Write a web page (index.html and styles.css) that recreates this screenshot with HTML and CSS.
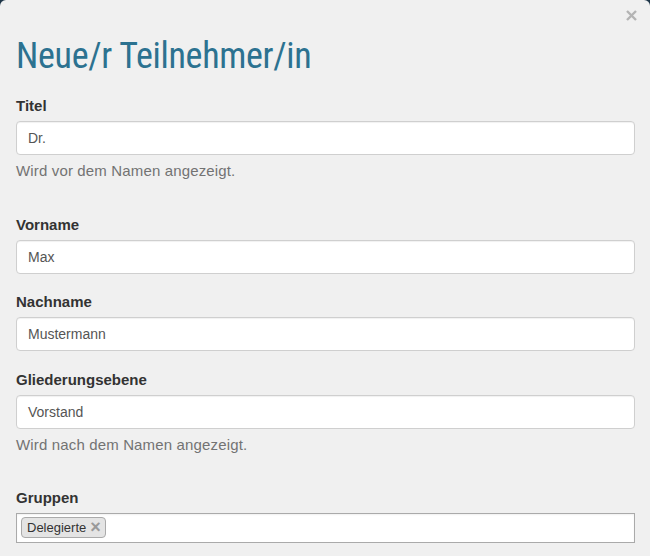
FILE: index.html
```html
<!DOCTYPE html>
<html lang="de">
<head>
<meta charset="utf-8">
<title>Neue/r Teilnehmer/in</title>
<link rel="stylesheet" href="styles.css">
</head>
<body>
<div class="modal">
  <div class="topbar">
    <button class="close" type="button" aria-label="Schließen">
      <svg width="11" height="11" viewBox="0 0 11 11"><path d="M1 1 L10 10 M10 1 L1 10" stroke="#b4b4b4" stroke-width="2.4" stroke-linecap="butt"/></svg>
    </button>
  </div>
  <h1 class="title">Neue/r Teilnehmer/in</h1>
  <form class="form">
    <div class="group with-help">
      <label class="label">Titel</label>
      <div class="input">Dr.</div>
      <p class="help">Wird vor dem Namen angezeigt.</p>
    </div>
    <div class="group">
      <label class="label">Vorname</label>
      <div class="input">Max</div>
    </div>
    <div class="group">
      <label class="label">Nachname</label>
      <div class="input">Mustermann</div>
    </div>
    <div class="group with-help">
      <label class="label">Gliederungsebene</label>
      <div class="input">Vorstand</div>
      <p class="help">Wird nach dem Namen angezeigt.</p>
    </div>
    <div class="group">
      <label class="label">Gruppen</label>
      <div class="select">
        <span class="tag">Delegierte <span class="tag-x">×</span></span>
      </div>
    </div>
  </form>
</div>
</body>
</html>
```
FILE: styles.css
```css
html, body {
  margin: 0;
  padding: 0;
  background: #1d3547;
  height: 100%;
  overflow: hidden;
}
body {
  font-family: "Liberation Sans", Arial, sans-serif;
  color: #333;
}
.modal {
  background: #f0f0f0;
  border-radius: 6px 6px 0 0;
  min-height: 100%;
  padding: 0 15px 0 16px;
  box-sizing: border-box;
}
.topbar {
  height: 36px;
  display: flex;
  justify-content: flex-end;
  align-items: flex-start;
  padding-top: 10px;
  box-sizing: border-box;
  margin-right: -2px;
}
.close {
  border: 0;
  background: none;
  padding: 0;
  width: 11px;
  height: 11px;
  display: flex;
}
.title {
  margin: 0 0 19px;
  font-family: "Roboto Condensed", Roboto, sans-serif;
  font-weight: 400;
  font-size: 36px;
  line-height: 40px;
  letter-spacing: -0.3px;
  color: #2c7290;
}
.form {
  display: flex;
  flex-direction: column;
}
.group {
  margin-bottom: 17.5px;
}
.group.with-help {
  margin-bottom: 32.6px;
}
.label {
  display: block;
  font-size: 15px;
  font-weight: bold;
  line-height: 21px;
  margin-bottom: 5px;
  color: #333;
}
.input {
  height: 34px;
  box-sizing: border-box;
  border: 1px solid #cfcfcf;
  border-radius: 4px;
  background: #fff;
  box-shadow: inset 0 1px 1px rgba(0,0,0,0.06);
  padding: 0 11px;
  font-size: 14px;
  line-height: 32px;
  color: #555;
}
.help {
  margin: 5px 0 0;
  font-size: 15px;
  line-height: 21px;
  letter-spacing: 0.15px;
  color: #737373;
}
.select {
  height: 30px;
  box-sizing: border-box;
  border: 1px solid #aaa;
  background: #fff;
  box-shadow: inset 0 1px 2px rgba(0,0,0,0.06);
  padding: 3px 4px;
  display: flex;
  align-items: flex-start;
}
.tag {
  display: inline-flex;
  align-items: center;
  height: 21px;
  box-sizing: border-box;
  border: 1px solid #aaa;
  border-radius: 4px;
  background: #e4e4e4;
  padding: 0 4px 0 5px;
  font-size: 13px;
  color: #333;
}
.tag-x {
  margin-left: 4px;
  font-weight: bold;
  font-size: 18px;
  line-height: 19px;
  color: #999;
}
```
